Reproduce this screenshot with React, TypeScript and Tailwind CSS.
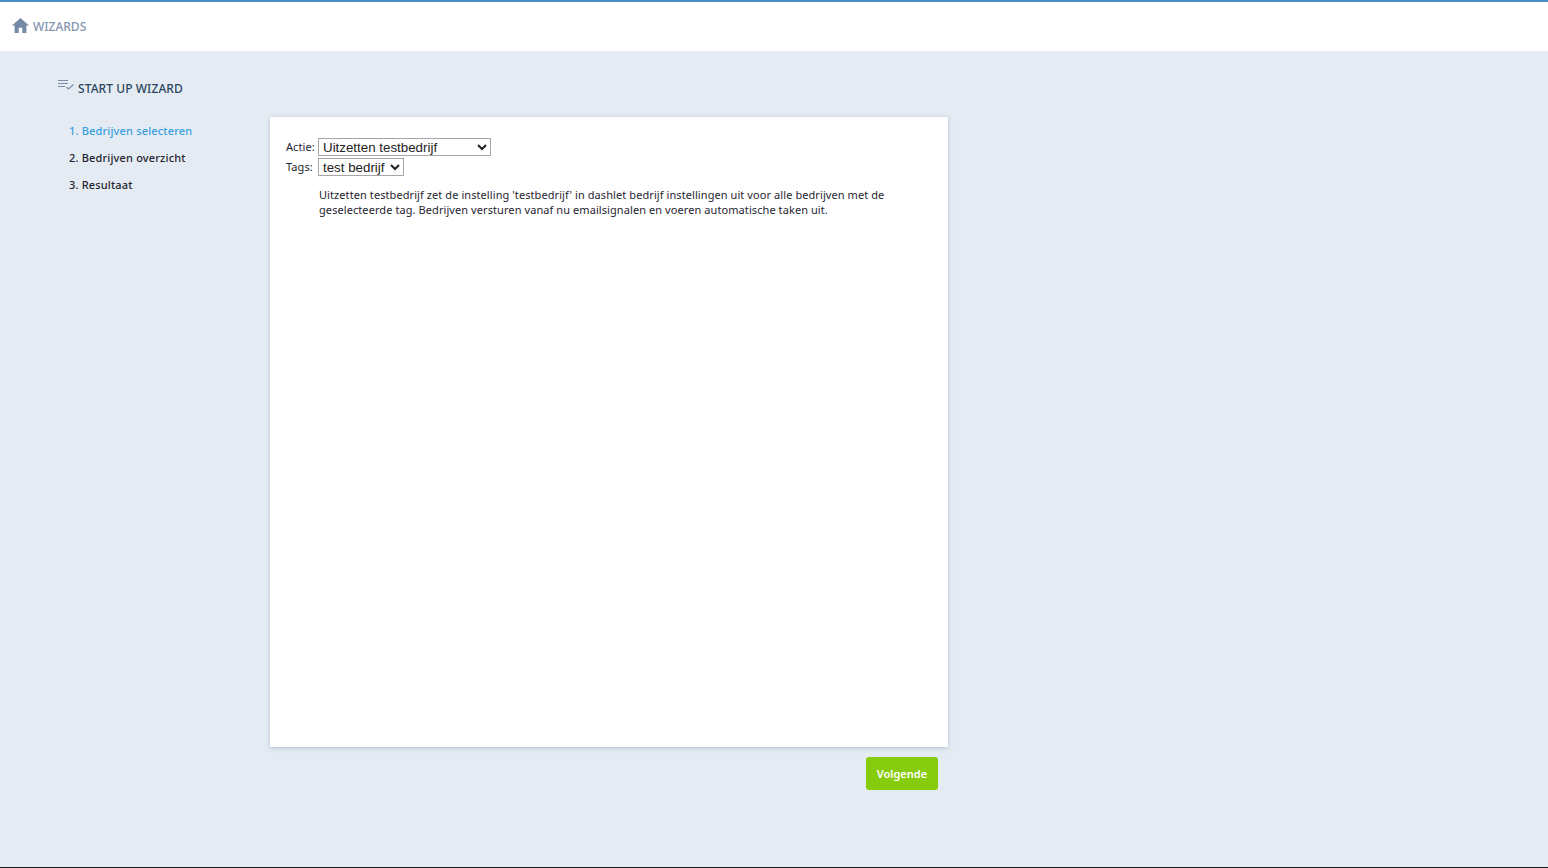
const steps = ['1. Bedrijven selecteren', '2. Bedrijven overzicht', '3. Resultaat'];

export default function App() {
  return (
    <div className="flex h-[868px] flex-col overflow-hidden border-b border-[#1c1c1c] bg-[#e4ebf3] font-['Noto_Sans',sans-serif]">
      <header className="flex h-[51px] items-center border-t-2 border-[#4a8fc4] bg-white pl-[12px]">
        <svg viewBox="0 0 17 15" className="mt-[-2px] h-[15px] w-[17px] text-[#7489a6]" fill="currentColor">
          <path d="M8.5 0 L17 7.6 L14.4 7.6 L14.4 15 L10.3 15 L10.3 9.8 L6.7 9.8 L6.7 15 L2.6 15 L2.6 7.6 L0 7.6 Z" />
        </svg>
        <span className="ml-[4px] text-[12px] font-medium text-[#8496b0]">WIZARDS</span>
      </header>

      <div className="flex items-center pl-[58px] pt-[27px]">
        <svg viewBox="0 0 17 13" className="mb-[7px] h-[13px] w-[17px] text-[#7b8da7]" fill="none" stroke="currentColor" strokeWidth="1.2">
          <path d="M0 1.5 H10 M0 4.5 H10 M0 7.5 H7 M8.5 8 L10.5 10 L15.5 5.5" />
        </svg>
        <h1 className="ml-[3px] text-[12px] font-medium leading-[22px] tracking-[0.07px] text-[#2d4660]">START UP WIZARD</h1>
      </div>

      <div className="flex pl-[69px] pt-[17px]">
        <nav className="flex w-[201px] flex-col gap-[10px] pt-[5px] text-[11px] font-medium leading-[17px] tracking-[0.17px]">
          {steps.map((step, i) => (
            <span key={step} className={i === 0 ? 'text-[#3a9fe0]' : 'text-[#1f2530]'}>
              {step}
            </span>
          ))}
        </nav>

        <div className="flex w-[678px] flex-col items-end">
          <main className="h-[630px] w-full bg-white pl-4 pt-[20px] text-[11px] tracking-[0.08px] text-[#1f2530] shadow-[0_1px_4px_rgba(90,110,140,0.35)]">
            <div className="flex h-[20px] items-center">
              <label className="w-[32px]">Actie:</label>
              <select className="h-[18px] w-[173px] border border-[#a6a6a6] bg-white font-['Liberation_Sans',sans-serif] text-[13.33px] leading-[16px] tracking-normal text-[#222]">
                <option>Uitzetten testbedrijf</option>
              </select>
            </div>
            <div className="flex h-[20px] items-center">
              <label className="w-[32px]">Tags:</label>
              <select className="h-[18px] w-[86px] border border-[#a6a6a6] bg-white font-['Liberation_Sans',sans-serif] text-[13.33px] leading-[16px] tracking-normal text-[#222]">
                <option>test bedrijf</option>
              </select>
            </div>
            <p className="ml-[33px] mt-[10px] w-[600px] leading-[15px]">
              Uitzetten testbedrijf zet de instelling 'testbedrijf' in dashlet bedrijf instellingen uit voor alle bedrijven met de geselecteerde tag. Bedrijven versturen vanaf nu emailsignalen en voeren automatische taken uit.
            </p>
          </main>
          <button className="mr-[10px] mt-[10px] h-[33px] w-[72px] rounded-[3px] bg-[#87cb0d] pt-[1px] text-[11px] font-semibold text-white">
            Volgende
          </button>
        </div>
      </div>
    </div>
  );
}
